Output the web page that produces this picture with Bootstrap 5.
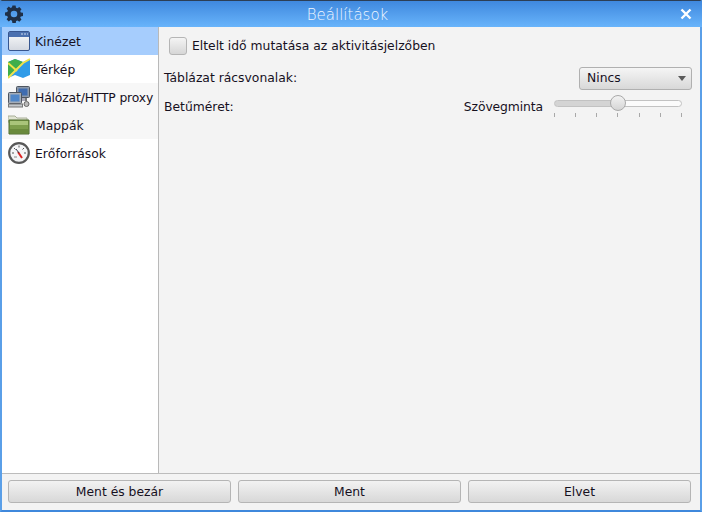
<!DOCTYPE html>
<html lang="hu">
<head>
<meta charset="utf-8">
<title>Beállítások</title>
<link href="https://cdn.jsdelivr.net/npm/bootstrap@5.3.0/dist/css/bootstrap.min.css" rel="stylesheet">
<style>
html,body{height:100%;margin:0;overflow:hidden}
body{font-family:"DejaVu Sans",sans-serif;font-size:12.35px;color:#16101e;background:#f3f3f3}
.win{width:702px;height:512px;border-top:1px solid #2c3e55;border-left:2px solid #5a9fe8;border-right:2px solid #5a9fe8;border-bottom:2px solid #3f88dc}
.ttl{height:26px;background:linear-gradient(#3f88de,#68b4fb);color:#f0f6ff;font-size:15px;font-weight:300;margin:0 -2px;padding:0 10px 0 5px;flex:none}
.ttl-t{flex:1;text-align:center;padding-right:8px;padding-top:2px}
.sidebar{width:157px;background:#fff;border-right:1px solid #b9b9b9;flex:none}
.sitem{height:28px;padding-left:6px;gap:3px;background:#fff;white-space:nowrap}
.sitem svg{flex:none}
.sitem span{padding-top:3px}
.sitem.alt{background:#f7f7f7}
.sitem.on{background:#a6cdfd}
.tight{letter-spacing:-.15px}
.pane{padding:7px 8px 0 5px;background:#f3f3f3}
.chk{width:18px;height:18px;border:1px solid #b5b5b5;border-radius:3px;background:linear-gradient(#f4f4f4,#d6d6d6);margin-left:5px;margin-right:5px;flex:none}
.r1{height:24px}
.r2{height:28px;margin-top:6px}
.r3{height:28px;margin-top:1px}
.dd{width:113px;height:23px;border:1px solid #b0b0b0;border-radius:3px;background:linear-gradient(#f5f5f5,#d8d8d8);padding:0 5px 0 7px}
.tri{width:0;height:0;border-left:4.500px solid transparent;border-right:4.500px solid transparent;border-top:5px solid #5a5a5a}
.sl{width:128px;margin-left:11px;margin-right:10px;height:26px;position:relative;flex:none}
.sl-track{height:7px;margin-top:6px;border:1px solid #c2c2c2;border-radius:4px;background:linear-gradient(90deg,#d4d4d4 50%,#fbfbfb 50%)}
.sl-thumb{position:absolute;left:56px;top:1px;width:16px;height:16px;border-radius:50%;border:1px solid #a9a9a9;background:linear-gradient(#f2f2f2,#d5d5d5)}
.ticks{margin-top:6px;height:4px}
.ticks i{width:1px;height:4px;background:#a8a8a8;display:block}
.foot{height:37px;border-top:1px solid #bcbcbc;background:#f3f3f3;padding:6px 9px 0 6px;gap:7px;flex:none}
.fbtn{width:223px;height:23px;border:1px solid #b5b5b5;border-radius:3px;background:linear-gradient(#f2f2f2,#d8d8d8);padding:1px 0 0;color:#16101e;font-size:12.35px;line-height:21px}
.szm{letter-spacing:-.1px;margin-left:2px}
</style>
</head>
<body>
<div class="win d-flex flex-column">
  <div class="ttl d-flex align-items-center">
    <svg width="18" height="18" viewBox="0 0 18 18"><path fill="#1f2f47" fill-rule="evenodd" d="M7.4 1h3.2l.4 2.2 1.4.6L14.300 2.500l2.200 2.200-1.300 1.800.6 1.400 2.200.4v3.200l-2.200.4-.6 1.400 1.300 1.800-2.200 2.200-1.800-1.300-1.400.6-.4 2.200H7.400L7 16.200l-1.400-.6-1.800 1.300-2.200-2.200 1.300-1.800-.6-1.400L0 11.100V7.900l2.300-.4.6-1.400-1.300-1.800 2.200-2.200 1.800 1.300 1.400-.6zM9 6.200a3.300 3.300 0 1 0 0 6.600 3.300 3.300 0 0 0 0-6.600z" transform="translate(0 -.5)"/></svg>
    <div class="ttl-t">Beállítások</div>
    <svg width="12" height="12" viewBox="0 0 12 12"><path d="M1.500 1.500l9 9M10.500 1.500l-9 9" stroke="#fff" stroke-width="2.400"/></svg>
  </div>
  <div class="d-flex flex-grow-1" style="min-height:0">
    <div class="sidebar">
      <div class="sitem on d-flex align-items-center">
        <svg width="24" height="22" viewBox="0 0 24 22"><defs><linearGradient id="wb" x1="0" y1="0" x2="0" y2="1"><stop offset="0" stop-color="#fbfcfd"/><stop offset="1" stop-color="#d3d7df"/></linearGradient></defs><rect x=".5" y="1.500" width="21" height="19" rx="1.500" fill="url(#wb)" stroke="#37568f"/><rect x="1" y="2" width="20" height="5" fill="#4a70b0"/><path d="M13 4h2M16 4h2M19 4h1" stroke="#cfdcf0"/></svg>
        <span>Kinézet</span>
      </div>
      <div class="sitem d-flex align-items-center">
        <svg width="24" height="22" viewBox="0 0 24 22"><path d="M0 4l7-3 8 3 7-3v16l-7 3-8-3-7 3z" fill="#2f9be8"/><path d="M0 4l7-3 8 3L0 19z" fill="#3fae4b"/><path d="M0 20L15 5l7-4" fill="none" stroke="#f0e24a" stroke-width="2"/><path d="M0 5l9 8" stroke="#f0e24a" stroke-width="2"/></svg>
        <span>Térkép</span>
      </div>
      <div class="sitem alt d-flex align-items-center">
        <svg width="24" height="22" viewBox="0 0 24 22"><rect x="8.500" y=".5" width="13" height="11" rx="1" fill="#8c98a8" stroke="#4d5560"/><rect x="10.500" y="2.500" width="9" height="7" fill="#3f6cb0"/><path d="M13 12h5v3h-5z" fill="#aab"/><rect x=".5" y="6.500" width="13" height="11" rx="1" fill="#a5adb8" stroke="#4d5560"/><rect x="2.500" y="8.500" width="9" height="7" fill="#4f86c8"/><rect x=".5" y="18" width="14" height="3" fill="#c4c8cc" stroke="#777"/><circle cx="18.500" cy="18" r="2.500" fill="#bbb" stroke="#666"/><path d="M18 12v3" stroke="#777" stroke-width="2"/></svg>
        <span class="tight">Hálózat/HTTP proxy</span>
      </div>
      <div class="sitem alt d-flex align-items-center">
        <svg width="24" height="22" viewBox="0 0 24 22"><path d="M0 2h7l2 2h10v4H0z" fill="#e0e4d2" stroke="#a8ae98"/><path d="M1 6h20v14H1z" fill="#7d9e4c" stroke="#4f6a2c"/><path d="M2 7h18v4H2z" fill="#a9c47a"/><path d="M2 15h18v4H2z" fill="#6a8a3c"/></svg>
        <span>Mappák</span>
      </div>
      <div class="sitem d-flex align-items-center">
        <svg width="24" height="22" viewBox="0 0 24 22"><circle cx="11" cy="11" r="9.800" fill="#f4f5f7" stroke="#585858" stroke-width="2.200"/><path d="M11 3.500v2M4 11h2M18 11h-2M6 6l1.500 1.500M16 6l-1.500 1.500" stroke="#555"/><path d="M10 10l4 6" stroke="#d22" stroke-width="2"/><path d="M11 11L8 7" stroke="#334" stroke-width="1"/><path d="M6 15h3" stroke="#888"/></svg>
        <span>Erőforrások</span>
      </div>
    </div>
    <div class="pane flex-grow-1">
      <div class="r1 d-flex align-items-center"><span class="chk"></span><span>Eltelt idő mutatása az aktivitásjelzőben</span></div>
      <div class="r2 d-flex align-items-center justify-content-between">
        <span>Táblázat rácsvonalak:</span>
        <div class="dd d-flex align-items-center justify-content-between"><span>Nincs</span><span class="tri"></span></div>
      </div>
      <div class="r3 d-flex align-items-center">
        <span class="flex-grow-1">Betűméret:</span>
        <span class="szm">Szövegminta</span>
        <div class="sl">
          <div class="sl-track"></div>
          <div class="sl-thumb"></div>
          <div class="ticks d-flex justify-content-between"><i></i><i></i><i></i><i></i><i></i><i></i><i></i></div>
        </div>
      </div>
    </div>
  </div>
  <div class="foot d-flex">
    <button type="button" class="btn fbtn">Ment és bezár</button>
    <button type="button" class="btn fbtn">Ment</button>
    <button type="button" class="btn fbtn">Elvet</button>
  </div>
</div>
<script src="https://cdn.jsdelivr.net/npm/bootstrap@5.3.0/dist/js/bootstrap.bundle.min.js"></script>
</body>
</html>
